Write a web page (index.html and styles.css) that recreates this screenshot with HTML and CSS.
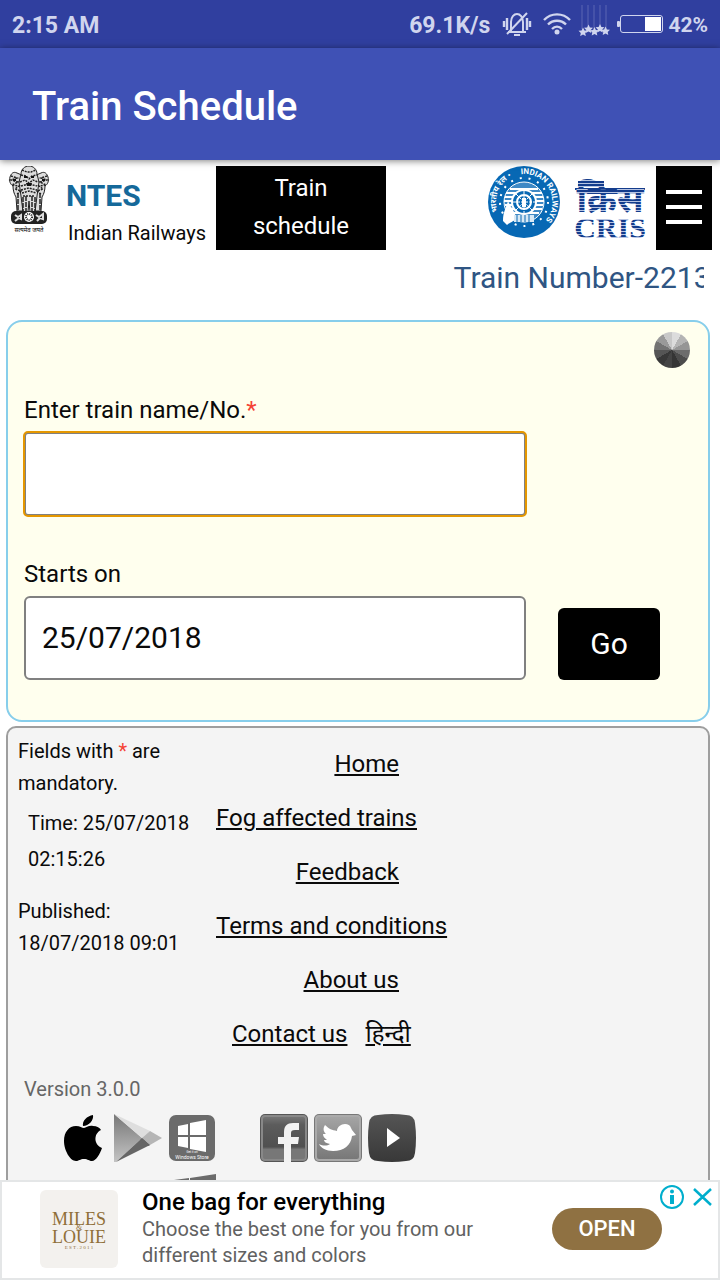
FILE: index.html
```html
<!DOCTYPE html>
<html lang="en">
  <head>
  <title>Train Schedule</title>
  <meta charset="utf-8">
  <meta name="viewport" content="width=device-width">
  <link rel="stylesheet" href="styles.css">
  </head>
  <body>

    <div class="status-bar">
      <span class="clock">2:15 AM</span>
      <span class="speed">69.1K/s</span>
      <svg class="icon-silent" width="30" height="26" viewBox="0 0 30 26" fill="none" stroke="#d0d5ee" stroke-width="2">
        <path d="M6 21h18M9 20V11c0-5 3-8 6-8s6 3 6 8v9M12 24h6M25 2L5 23"/>
        <path d="M2 10v6M5 7v12M28 10v6M25 7v12" stroke-width="2.400"/>
      </svg>
      <svg class="icon-wifi" width="28" height="22" viewBox="0 0 28 22" fill="none" stroke="#d0d5ee" stroke-width="2.400">
        <path d="M1 7C8-0.500 20-0.500 27 7M5 11.500c5-5 13-5 18 0M9 16c3-3 7-3 10 0"/>
        <circle cx="14" cy="19" r="2.500" fill="#d0d5ee" stroke="none"/>
      </svg>
      <svg class="icon-signal" width="32" height="32" viewBox="0 0 32 32">
        <defs><path id="star" d="M0-4.500l1.400 2.900 3.100.4-2.300 2.200.6 3.100L0 2.600l-2.800 1.500.6-3.100-2.300-2.200 3.100-.4z"/></defs>
        <path d="M4 1v24M10 1v21M16 1v24M22 1v21M28 1v24" stroke="#5a66b3" stroke-width="1"/>
        <g fill="#d0d5ee">
          <use href="#star" x="5" y="28"/><use href="#star" x="10.500" y="25"/><use href="#star" x="16.500" y="27.500"/>
          <use href="#star" x="22" y="24.500"/><use href="#star" x="27.500" y="27"/>
        </g>
      </svg>
      <svg class="icon-battery" width="46" height="18" viewBox="0 0 46 18">
        <rect x="3.500" y=".5" width="42" height="17" rx="2.500" fill="none" stroke="#d0d5ee" stroke-width="1"/>
        <rect x="0" y="6" width="3" height="6" rx="1" fill="#d0d5ee"/>
        <rect x="28" y="2" width="16" height="14" fill="#fff"/>
      </svg>
      <span class="battery-level">42%</span>
    </div>

    <header class="toolbar">
      <h1>Train Schedule</h1>
    </header>

    <main>

      <div class="site-header">
        <svg class="emblem" width="42" height="70" viewBox="0 0 42 70">
          <g fill="#ddd" stroke="#222" stroke-width="1">
            <path d="M9 7C5 5 3 8 2 11c-1 4 0 7 3 9 0 4 1 8 3 11l1 14h6l1-17V10z"/>
            <path d="M33 7c4-2 6 1 7 4 1 4 0 7-3 9 0 4-1 8-3 11l-1 14h-6l-1-17V10z"/>
            <path d="M13 8c0-5 4-8 8-8s8 3 8 8l2 8-2 14-2 16h-5l-1-11-1 11h-5l-2-16-2-14z"/>
          </g>
          <g fill="none" stroke="#222" stroke-width="1.500" stroke-dasharray="2 1">
            <path d="M3 10l6 2-6 2 7 2-6 3 7 1-4 3 6 2-4 3M39 10l-6 2 6 2-7 2 6 3-7 1 4 3-6 2 4 3"/>
            <path d="M14 4l5 2h4l5-2M13 9l5 1 3 3 3-3 5-1M12 16l5-2 4 3 4-3 5 2M13 20l8-2 8 2M13 24l8-2 8 2M14 27l7-2 7 2M15 30h12"/>
            <path d="M10 27v18M15 31v14M18 30v15M24 30v15M27 31v14M32 27v18" stroke-dasharray="5 1"/>
          </g>
          <path d="M16 10h3v2h-3zM23 10h3v2h-3zM18 17h6l-1 3h-4zM5 13h3v2H5zM34 13h3v2h-3z" fill="#111"/>
          <rect x="3" y="45" width="36" height="13" rx="5" fill="#222"/>
          <circle cx="21" cy="51" r="5" fill="#fff"/>
          <circle cx="21" cy="51" r="3" fill="none" stroke="#222" stroke-width="2" stroke-dasharray="1 1"/>
          <path d="M7 49l3 2 3-2v4l-2-1-4 3M28 49l3 2 4-3v5l-3-1-3 3" fill="none" stroke="#ddd" stroke-width="2"/>
          <text x="21" y="66" class="emblem-motto">सत्यमेव जयते</text>
        </svg>
        <div class="brand">
          <strong>NTES</strong>
          <span>Indian Railways</span>
        </div>
        <h2 class="page-name">Train schedule</h2>

        <svg class="logo-ir" width="72" height="72" viewBox="0 0 72 72">
          <defs>
            <path id="ring-right" d="M33 8.200A28 28 0 1 1 36 64"/>
            <path id="ring-left" d="M9.700 45.600A28 28 0 0 1 33 8.200"/>
          </defs>
          <circle cx="36" cy="36" r="36" fill="#0768b4"/>
          <circle cx="36" cy="36" r="24" fill="none" stroke="#fff" stroke-width="2" stroke-dasharray="2 7"/>
          <circle cx="36" cy="36" r="20" fill="#3f89c5" stroke="#fff" stroke-width="1"/>
          <path d="M22 23h28M18 27h36M17 31h38M16 35h40M17 39h38M18 43h36M21 47h30M26 51h20" stroke="#fff" stroke-width="2"/>
          <circle cx="36" cy="36" r="12" fill="#0768b4" stroke="#fff" stroke-width="2"/>
          <circle cx="36" cy="36" r="7" fill="none" stroke="#fff" stroke-width="2"/>
          <path d="M36 25v22M25 36h22M28 28l16 16M44 28L28 44" stroke="#fff" stroke-width="1" stroke-dasharray="3 1"/>
          <path d="M34 32h4v9h-4z" fill="#fff"/>
          <path d="M20 35c-2 7-5 11-5 20l4 4c3-3 7-3 9-7-1-7-5-10-8-17z" fill="#fff"/>
          <path d="M26 49h20v7H26z" fill="#d8e9f5"/>
          <path d="M29 49v7M33 49v7M37 49v7M41 49v7" stroke="#0768b4"/>
          <g class="ring-text">
            <text><textPath href="#ring-right">INDIAN RAILWAYS</textPath></text>
            <text><textPath href="#ring-left">भारतीय रेल •</textPath></text>
          </g>
        </svg>
        <svg class="logo-cris" width="74" height="64" viewBox="0 0 74 64">
          <defs>
            <pattern id="stripes" width="3" height="3" patternUnits="userSpaceOnUse">
              <rect width="3" height="2" fill="#143c8c"/>
              <rect y="2" width="3" height="1" fill="#b7c4e2"/>
            </pattern>
          </defs>
          <path d="M5 3h26v6H5z" fill="url(#stripes)"/>
          <path d="M2 11h70" stroke="#143c8c" stroke-width="2"/>
          <text x="37" y="34" class="cris-hindi">क्रिस</text>
          <text x="37" y="60" class="cris-latin">CRIS</text>
        </svg>
        <button class="menu-button" type="button" aria-label="Menu">
          <svg width="36" height="36" viewBox="0 0 36 36"><path d="M0 3h36M0 18h36M0 33h36" stroke="#fff" stroke-width="4"/></svg>
        </button>
      </div>

      <div class="ticker">Train Number-22138</div>

      <form class="search-panel">
        <div class="spinner"></div>
        <div class="field">
          <label for="train-name">Enter train name/No.<span class="required">*</span></label>
          <input id="train-name" class="active" type="text">
        </div>
        <div class="field-row">
          <div class="field">
            <label for="start-date">Starts on</label>
            <input id="start-date" type="text" value="25/07/2018">
          </div>
          <button class="go-button" type="submit">Go</button>
        </div>
      </form>

      <footer class="info-panel">
        <div class="info-columns">
          <div class="notes">
            <p>Fields with <span class="required">*</span> are mandatory.</p>
            <p class="time">Time: 25/07/2018 02:15:26</p>
            <p>Published: 18/07/2018 09:01</p>
          </div>
          <ul class="links">
            <li><a href="#">Home</a></li>
            <li><a href="#">Fog affected trains</a></li>
            <li><a href="#">Feedback</a></li>
            <li><a href="#">Terms and conditions</a></li>
            <li><a href="#">About us</a></li>
            <li class="pair"><a href="#">Contact us</a><a href="#" lang="hi">हिन्दी</a></li>
          </ul>
        </div>
        <p class="version">Version 3.0.0</p>
        <div class="badges">
          <div class="badge-group stores">
            <a href="#" aria-label="App Store">
              <svg width="48" height="48" viewBox="0 0 48 48"><path d="M33 1c1 5-4 11-10 11C22 7 27 2 33 1zM41 16c-8 4-7 15 1 18-2 6-6 13-10 13-3 0-4-2-8-2s-5 2-8 2C10 47 4 36 4 27c0-9 5-15 12-15 4 0 6 2 8 2s5-3 9-2c4 0 7 2 8 4z"/></svg>
            </a>
            <a href="#" aria-label="Google Play">
              <svg width="48" height="48" viewBox="0 0 48 48">
                <defs><linearGradient id="play-left" x2="0" y2="1"><stop stop-color="#777"/><stop offset="1" stop-color="#c4c4c4"/></linearGradient></defs>
                <path d="M0 0l28 24L2 48H0z" fill="url(#play-left)"/>
                <path d="M0 0l36 17-8 7z" fill="#dedede"/>
                <path d="M28 24l8 7L2 48z" fill="#666"/>
                <path d="M36 17l12 7-12 7-8-7z" fill="#b5b5b5"/>
                <path d="M28 24l8 7-2 1-8-6z" fill="#666"/>
              </svg>
            </a>
            <a href="#" aria-label="Windows Store">
              <svg width="48" height="48" viewBox="0 0 48 48">
                <rect x="1" y="1" width="46" height="46" rx="7" fill="#6b6b6b"/>
                <path d="M10 12l10-2v11H10zM22 9l16-3v15H22zM10 23h10v11l-10-2zM22 23h16v15l-16-3z" fill="#fff"/>
                <text x="24" y="39" class="store-small">Get it on</text>
                <text x="24" y="45" class="store-text">Windows Store</text>
              </svg>
            </a>
            <a href="#" aria-label="Windows">
              <svg width="48" height="48" viewBox="0 0 48 48"><path d="M6 6l15-2v18H6zM22 4l26-4v22H22zM6 24h15v18L6 40zM22 24h26v22l-26-4z" fill="#6b6b6b"/></svg>
            </a>
          </div>
          <div class="badge-group">
            <a href="#" aria-label="Facebook">
              <svg width="48" height="48" viewBox="0 0 48 48">
                <defs><linearGradient id="fb" x2="0" y2="1"><stop stop-color="#777"/><stop offset=".2" stop-color="#5c5c5c"/><stop offset=".7" stop-color="#505050"/><stop offset=".76" stop-color="#777"/><stop offset="1" stop-color="#777"/></linearGradient></defs>
                <rect width="48" height="48" rx="5" fill="#555"/>
                <rect x="2" y="2" width="44" height="44" rx="3" fill="url(#fb)" stroke="#888" stroke-width="2"/>
                <path d="M24 48V30h-6v-7h6v-5c0-6 3-9 9-9h6v7h-4c-3 0-4 1-4 3v4h8l-1 7h-7v18z" fill="#f2f2f2"/>
              </svg>
            </a>
            <a href="#" aria-label="Twitter">
              <svg width="48" height="48" viewBox="0 0 48 48">
                <defs><linearGradient id="tw" x2="0" y2="1"><stop stop-color="#a5a5a5"/><stop offset="1" stop-color="#777"/></linearGradient></defs>
                <rect width="48" height="48" rx="5" fill="#777"/>
                <rect x="2" y="2" width="44" height="44" rx="3" fill="url(#tw)" stroke="#aaa" stroke-width="2"/>
                <path d="M11 11c4 4 7 5 12 6 0-4 4-7 8-7 3 0 5 1 6 4l1 2 4 5-4 1C37 31 30 37 19 37c-7 0-12-3-14-7 4 2 8 2 11 0-4-1-6-2-6-4h3c-2-2-4-3-4-6l3 0c-3-3-3-6-1-9z" fill="#fff"/>
              </svg>
            </a>
            <a href="#" aria-label="YouTube">
              <svg width="48" height="48" viewBox="0 0 48 48">
                <defs><linearGradient id="yt" x2="0" y2="1"><stop stop-color="#555"/><stop offset="1" stop-color="#383838"/></linearGradient></defs>
                <path d="M10 1Q24-1 38 1q8 0 9 8 2 15 0 30-1 8-9 8-14 2-28 0-8 0-9-8-2-15 0-30 1-8 9-8z" fill="url(#yt)"/>
                <path d="M19 14l13 10-13 9z" fill="#fff"/>
              </svg>
            </a>
          </div>
        </div>
      </footer>

    </main>

    <aside class="ad">
      <svg class="ad-logo" width="78" height="78" viewBox="0 0 78 78">
        <rect width="78" height="78" rx="6" fill="#f3f1ee"/>
        <text x="39" y="35" class="ad-name">MILES</text>
        <text x="39" y="53" class="ad-name">LOUIE</text>
        <text x="39" y="40" class="ad-amp">&amp;</text>
        <text x="39" y="59" class="ad-est">E S T . 2 0 1 1</text>
      </svg>
      <div class="ad-copy">
        <strong>One bag for everything</strong>
        <p>Choose the best one for you from our different sizes and colors</p>
      </div>
      <button class="ad-open" type="button">OPEN</button>
      <div class="ad-controls">
        <button type="button" aria-label="Ad info">
          <svg width="24" height="24" viewBox="0 0 24 24"><circle cx="12" cy="12" r="11" fill="none" stroke="#00aecd" stroke-width="2"/><circle cx="12" cy="6.500" r="2" fill="#00aecd"/><path d="M12 10v9" stroke="#00aecd" stroke-width="4"/></svg>
        </button>
        <button type="button" aria-label="Close ad">
          <svg width="24" height="24" viewBox="0 0 24 24"><path d="M4 4l17 16M21 4L4 20" stroke="#00aecd" stroke-width="2.500"/></svg>
        </button>
      </div>
    </aside>

  </body>
</html>
```
FILE: styles.css
```css
*
{
  box-sizing: border-box;
}
body
{
  display: flex;
  flex-direction: column;
  height: 100vh;
  margin: 0;
  background: #fff;
  color: #0a0a0a;
  font-family: Roboto, "Noto Sans", sans-serif;
  font-size: 24px;
}
h1,
h2,
p,
ul
{
  margin: 0;
  padding: 0;
  font-weight: normal;
}
svg
{
  display: block;
  flex: none;
}
button
{
  padding: 0;
  border: 0;
  background: none;
  font: inherit;
  cursor: pointer;
}

/* System bar and app title */
.status-bar
{
  display: flex;
  flex: none;
  align-items: center;
  height: 48px;
  padding: 2px 12px 0;
  background: #303f9f;
  color: #d0d5ee;
  font-size: 23px;
  font-weight: bold;
}
.clock
{
  flex: 1;
}
.icon-silent
{
  margin: 0 11px 2px 12px;
}
.icon-wifi
{
  margin-bottom: 2px;
}
.icon-signal
{
  margin: 0 7px 10px;
}
.icon-battery
{
  margin-bottom: 2px;
}
.battery-level
{
  margin-left: 5px;
  font-size: 21px;
}
.toolbar
{
  position: relative;
  display: flex;
  flex: none;
  align-items: center;
  height: 112px;
  padding: 4px 32px 0;
  background: #3f51b5;
  box-shadow: 0 1px 7px rgba(0, 0, 0, 0.5);
}
.toolbar h1
{
  color: #fff;
  font-size: 40px;
  font-weight: 500;
}

main
{
  flex: 1;
  min-height: 0;
  overflow: hidden;
}

/* NTES header */
.site-header
{
  display: flex;
  align-items: flex-start;
  padding: 6px 8px 0;
}
.emblem-motto
{
  font-size: 6px;
  text-anchor: middle;
}
.brand
{
  display: flex;
  flex-direction: column;
  width: 166px;
  padding: 10px 0 0 16px;
}
.brand strong
{
  color: #15699a;
  font-size: 30px;
  line-height: 40px;
}
.brand span
{
  padding-left: 2px;
  font-size: 20px;
  line-height: 34px;
}
.page-name
{
  width: 170px;
  height: 84px;
  padding: 3px 30px;
  background: #000;
  color: #fff;
  font-size: 24px;
  line-height: 38px;
  text-align: center;
}
.logo-ir
{
  margin-left: auto;
}
.ring-text
{
  fill: #fff;
  font-size: 8px;
  font-weight: bold;
}
.logo-cris
{
  margin: 12px 9px 0 13px;
}
.cris-hindi,
.cris-latin
{
  fill: url(#stripes);
  font-weight: bold;
  text-anchor: middle;
}
.cris-hindi
{
  font-size: 36px;
}
.cris-latin
{
  font-family: "Liberation Serif", serif;
  font-size: 30px;
}
.menu-button
{
  display: flex;
  align-items: center;
  justify-content: center;
  width: 56px;
  height: 84px;
  padding-bottom: 2px;
  background: #000;
}
.ticker
{
  height: 70px;
  margin-right: 16px;
  padding-left: 63vw;
  overflow: hidden;
  color: #2f5583;
  font-size: 30px;
  line-height: 56px;
  white-space: nowrap;
}

/* Search form */
.search-panel
{
  display: flex;
  flex-direction: column;
  margin: 0 10px 4px 6px;
  padding: 10px 16px 40px;
  background: #ffffee;
  border: 2px solid #87ceeb;
  border-radius: 16px;
}
.spinner
{
  align-self: flex-end;
  width: 36px;
  height: 36px;
  margin-right: 2px;
  border-radius: 50%;
  background: conic-gradient(#dcdcdc 30deg, #b4b4b4 0 60deg, #959595 0 90deg, #6c6c6c 0 120deg, #4c4c4c 0 150deg, #353535 0 180deg, #444 0 210deg, #383838 0 240deg, #555 0 270deg, #737373 0 300deg, #999 0 330deg, #c8c8c8 0);
}
.field
{
  display: flex;
  flex-direction: column;
  width: calc(75% + 1px);
}
.field label
{
  line-height: 28px;
}
.search-panel > .field
{
  margin-top: 28px;
}
.field input
{
  width: 100%;
  height: 84px;
  margin-top: 8px;
  padding: 0 16px 2px;
  background: #fff;
  border: 2px solid #808080;
  border-radius: 6px;
  color: #0a0a0a;
  font: inherit;
  font-size: 30px;
}
.field input.active
{
  border-radius: 4px;
  outline: 2px solid #e59700;
  outline-offset: -1px;
}
.required
{
  color: #f44336;
}
.field-row
{
  display: flex;
  align-items: flex-end;
  gap: 32px;
  margin-top: 44px;
}
.go-button
{
  width: 102px;
  height: 72px;
  padding-bottom: 2px;
  background: #000;
  border-radius: 6px;
  color: #fff;
  font-size: 30px;
}

/* Notes, links and badges */
.info-panel
{
  margin: 0 10px 0 6px;
  padding: 7px 10px;
  background: #f4f4f4;
  border: 2px solid #9e9e9e;
  border-radius: 10px;
}
.info-columns
{
  display: flex;
}
.notes
{
  width: 198px;
  font-size: 20px;
  line-height: 32px;
}
.notes p
{
  padding-right: 30px;
}
.notes .time
{
  padding: 6px 9px 18px 10px;
  line-height: 36px;
}
.links
{
  width: 183px;
  padding-top: 2px;
  list-style-type: none;
}
.links li
{
  line-height: 54px;
  text-align: right;
  white-space: nowrap;
}
.links a
{
  color: inherit;
}
.links .pair
{
  display: flex;
  gap: 18px;
  padding-left: 16px;
}
.version
{
  padding: 14px 6px 11px;
  color: #666;
  font-size: 20px;
  line-height: 28px;
}
.badges
{
  display: flex;
  gap: 44px;
  padding-left: 42px;
}
.badge-group
{
  display: flex;
  gap: 6px;
}
.stores
{
  flex-wrap: wrap;
  justify-content: flex-end;
  width: 156px;
  row-gap: 12px;
}
.store-small,
.store-text
{
  fill: #fff;
  font-size: 5px;
  text-anchor: middle;
}
.store-small
{
  font-size: 3px;
}

/* Banner */
.ad
{
  position: relative;
  display: flex;
  flex: none;
  align-items: center;
  height: 100px;
  padding: 0 56px 2px 38px;
  background: #fff;
  border: 2px solid #e4e6e7;
}
.ad-name,
.ad-amp,
.ad-est
{
  fill: #8f6f38;
  font-family: "Liberation Serif", serif;
  text-anchor: middle;
}
.ad-name
{
  font-size: 18px;
}
.ad-amp
{
  font-size: 8px;
}
.ad-est
{
  font-size: 5px;
}
.ad-copy
{
  flex: 1;
  padding: 0 60px 2px 24px;
}
.ad-copy strong
{
  color: #000;
  font-size: 24px;
  font-weight: 500;
  line-height: 28px;
}
.ad-copy p
{
  color: #616161;
  font-size: 20px;
  line-height: 26px;
}
.ad-open
{
  width: 110px;
  height: 42px;
  padding-bottom: 2px;
  background: #8f7142;
  border-radius: 21px;
  color: #fff;
  font-size: 22px;
  font-weight: 500;
}
.ad-controls
{
  position: absolute;
  top: 3px;
  right: 4px;
  display: flex;
  gap: 6px;
}
```
